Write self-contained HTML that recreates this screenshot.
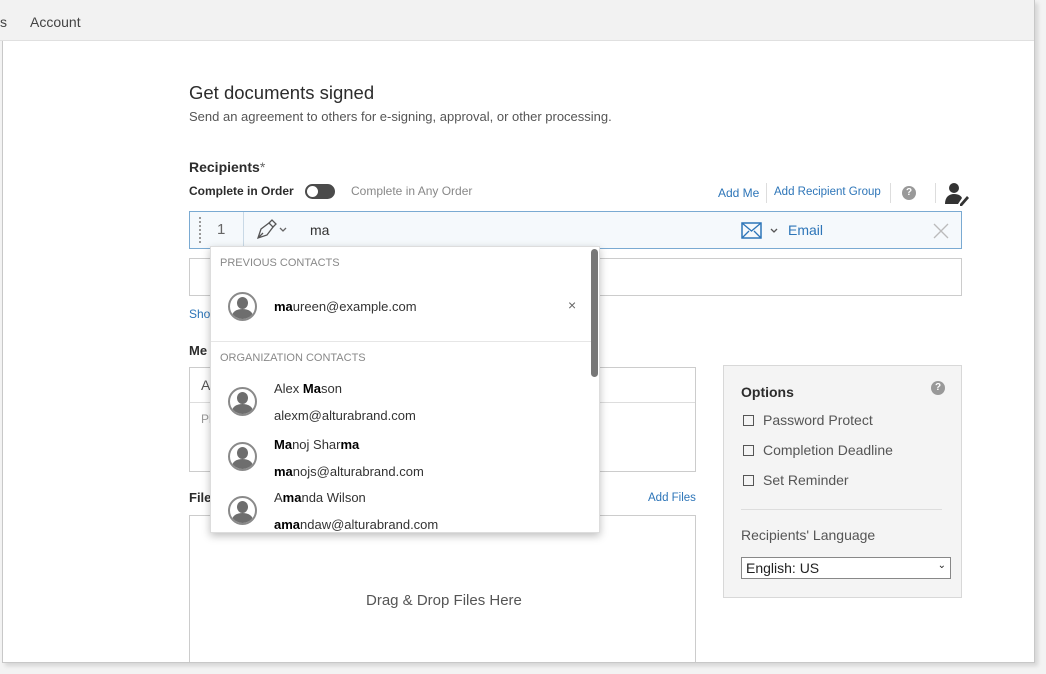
<!DOCTYPE html>
<html><head><meta charset="utf-8"><style>
*{margin:0;padding:0;box-sizing:border-box}
body{width:1046px;height:674px;background:#f3f3f3;font-family:"Liberation Sans",sans-serif;position:relative;overflow:hidden;color:#2c2c2c}
.a{position:absolute;white-space:nowrap}
.win{position:absolute;left:2px;top:0;width:1033px;height:663px;background:#fff;border:1px solid #c8c8c8;border-top:none;box-shadow:3px 3px 4px rgba(0,0,0,.12);overflow:hidden}
.top{position:absolute;left:0;top:0;width:1034px;height:41px;background:#f2f2f2;border-bottom:1px solid #e0e0e0}
.blue{color:#2d75b8}
.av{position:absolute;width:29px;height:29px;border-radius:50%;border:2px solid #8a8a8a;background:#fff;overflow:hidden}
.av:before{content:"";position:absolute;left:7px;top:3px;width:11px;height:12px;border-radius:50%;background:#6e6e6e}
.av:after{content:"";position:absolute;left:2px;top:15px;width:21px;height:14px;border-radius:50% 50% 0 0;background:#6e6e6e}
.cb{position:absolute;width:11px;height:11px;border:1.5px solid #555}
</style></head><body>
<div class="win">
<div class="a" style="left:186px;top:515px;width:507px;height:160px;border:1px solid #ccc"></div>
</div>
<div class="top"></div>
<div class="a" style="left:0;top:14px;font-size:14px;color:#444">s</div>
<div class="a" style="left:30px;top:14px;font-size:14px;color:#444">Account</div>

<div class="a" style="left:189px;top:82px;font-size:18.5px;color:#2c2c2c">Get documents signed</div>
<div class="a" style="left:189px;top:109px;font-size:13px;color:#555">Send an agreement to others for e-signing, approval, or other processing.</div>
<div class="a" style="left:189px;top:159px;font-size:14px;font-weight:bold">Recipients<span style="font-weight:normal;color:#666">*</span></div>
<div class="a" style="left:189px;top:184px;font-size:12px;font-weight:bold">Complete in Order</div>
<div class="a" style="left:305px;top:184px;width:30px;height:15px;border-radius:8px;background:#4b4b4b"><div style="position:absolute;left:2px;top:2px;width:11px;height:11px;border-radius:50%;background:#fff"></div></div>
<div class="a" style="left:351px;top:184px;font-size:12px;color:#888">Complete in Any Order</div>
<div class="a blue" style="left:718px;top:186px;font-size:12px">Add Me</div>
<div class="a" style="left:766px;top:183px;width:1px;height:20px;background:#ddd"></div>
<div class="a blue" style="left:774px;top:186px;font-size:11.5px">Add Recipient Group</div>
<div class="a" style="left:890px;top:183px;width:1px;height:20px;background:#ddd"></div>
<div class="a" style="left:902px;top:186px;width:14px;height:14px;border-radius:50%;background:#999;color:#fff;font-size:10px;font-weight:bold;text-align:center;line-height:14px">?</div>
<div class="a" style="left:935px;top:183px;width:1px;height:20px;background:#ddd"></div>
<svg class="a" style="left:944px;top:182px" width="26" height="24" viewBox="0 0 26 24"><circle cx="10" cy="6" r="5" fill="#333"/><path d="M1 22c0-7 4-10 9-10s7 2 8 4l-4 6z" fill="#333"/><path d="M16 22l7-8 2 2-7 8h-2z" fill="#333"/></svg>

<div class="a" style="left:189px;top:211px;width:773px;height:38px;border:1px solid #7aaad2;background:#f5f9fc"></div>
<div class="a" style="left:199px;top:217px;width:2px;height:26px;border-left:2px dotted #999"></div>
<div class="a" style="left:217px;top:221px;font-size:15px;color:#666">1</div>
<div class="a" style="left:243px;top:212px;width:1px;height:36px;background:#c9d9e6"></div>
<svg class="a" style="left:255px;top:219px" width="36" height="22" viewBox="0 0 36 22"><path d="M3 19l3-9 8-6 4 4-6 8z M3 19l5-5" fill="none" stroke="#555" stroke-width="1.3"/><path d="M14 4l3-3 4 4-3 3" fill="none" stroke="#555" stroke-width="1.3"/><path d="M25 9l3 3 3-3" fill="none" stroke="#666" stroke-width="1.3"/></svg>
<div class="a" style="left:310px;top:222px;font-size:14px;color:#333">ma</div>
<svg class="a" style="left:741px;top:222px" width="42" height="18" viewBox="0 0 42 18"><rect x="1" y="1" width="19" height="15" fill="none" stroke="#2d75b8" stroke-width="1.5"/><path d="M1 1l9.5 8L20 1M1 16l7-7M20 16l-7-7" fill="none" stroke="#2d75b8" stroke-width="1.3"/><path d="M30 7l3 3 3-3" fill="none" stroke="#555" stroke-width="1.3"/></svg>
<div class="a blue" style="left:788px;top:222px;font-size:14px">Email</div>
<svg class="a" style="left:933px;top:223px" width="16" height="16"><path d="M1 1l14 14M15 1L1 15" stroke="#bbb" stroke-width="1.3"/></svg>

<div class="a" style="left:189px;top:258px;width:773px;height:38px;border:1px solid #ccc"></div>
<div class="a blue" style="left:189px;top:307px;font-size:12px">Sho</div>
<div class="a" style="left:189px;top:343px;font-size:13px;font-weight:bold">Me</div>
<div class="a" style="left:189px;top:367px;width:507px;height:105px;border:1px solid #ccc"></div>
<div class="a" style="left:190px;top:402px;width:505px;height:1px;background:#ddd"></div>
<div class="a" style="left:201px;top:377px;font-size:14px;color:#555">A</div>
<div class="a" style="left:201px;top:412px;font-size:12px;color:#999">Pl</div>
<div class="a" style="left:189px;top:490px;font-size:13px;font-weight:bold">File</div>
<div class="a blue" style="left:648px;top:492px;font-size:11.5px">Add Files</div>
<div class="a" style="left:366px;top:592px;font-size:15px;color:#555">Drag &amp; Drop Files Here</div>

<div class="a" style="left:723px;top:365px;width:239px;height:233px;background:#f4f4f4;border:1px solid #d8d8d8"></div>
<div class="a" style="left:741px;top:384px;font-size:14px;font-weight:bold">Options</div>
<div class="a" style="left:931px;top:381px;width:14px;height:14px;border-radius:50%;background:#999;color:#fff;font-size:10px;font-weight:bold;text-align:center;line-height:14px">?</div>
<div class="cb" style="left:743px;top:415px"></div><div class="a" style="left:763px;top:412px;font-size:14px;color:#555">Password Protect</div>
<div class="cb" style="left:743px;top:445px"></div><div class="a" style="left:763px;top:442px;font-size:14px;color:#555">Completion Deadline</div>
<div class="cb" style="left:743px;top:475px"></div><div class="a" style="left:763px;top:472px;font-size:14px;color:#555">Set Reminder</div>
<div class="a" style="left:741px;top:509px;width:201px;height:1px;background:#ddd"></div>
<div class="a" style="left:741px;top:527px;font-size:14px;color:#555">Recipients' Language</div>
<div class="a" style="left:741px;top:557px;width:210px;height:22px;border:1px solid #888;background:#fff;font-size:14px;color:#222;padding:2px 4px">English: US<span style="position:absolute;right:4px;top:2px;font-size:10px">&#8964;</span></div>

<div class="a" style="left:210px;top:246px;width:390px;height:287px;background:#fff;border:1px solid #ddd;box-shadow:0 3px 8px rgba(0,0,0,.25);overflow:hidden">
<div class="a" style="left:9px;top:10px;font-size:11px;color:#888">PREVIOUS CONTACTS</div>
<div class="av" style="left:17px;top:45px"></div>
<div class="a" style="left:63px;top:52px;font-size:13px;color:#333"><b style="color:#000">ma</b>ureen@example.com</div>
<div class="a" style="left:357px;top:50px;font-size:14px;color:#666">×</div>
<div class="a" style="left:0;top:94px;width:380px;height:1px;background:#e6e6e6"></div>
<div class="a" style="left:9px;top:105px;font-size:11px;color:#888">ORGANIZATION CONTACTS</div>
<div class="av" style="left:17px;top:140px"></div>
<div class="a" style="left:63px;top:134px;font-size:13px;color:#333">Alex <b style="color:#000">Ma</b>son</div>
<div class="a" style="left:63px;top:161px;font-size:13px;color:#333">alexm@alturabrand.com</div>
<div class="av" style="left:17px;top:195px"></div>
<div class="a" style="left:63px;top:190px;font-size:13px;color:#333"><b style="color:#000">Ma</b>noj Shar<b style="color:#000">ma</b></div>
<div class="a" style="left:63px;top:217px;font-size:13px;color:#333"><b style="color:#000">ma</b>nojs@alturabrand.com</div>
<div class="av" style="left:17px;top:249px"></div>
<div class="a" style="left:63px;top:243px;font-size:13px;color:#333">A<b style="color:#000">ma</b>nda Wilson</div>
<div class="a" style="left:63px;top:270px;font-size:13px;color:#333"><b style="color:#000">ama</b>ndaw@alturabrand.com</div>
<div class="a" style="left:380px;top:2px;width:7px;height:128px;border-radius:4px;background:#777"></div>
</div>
</body></html>
